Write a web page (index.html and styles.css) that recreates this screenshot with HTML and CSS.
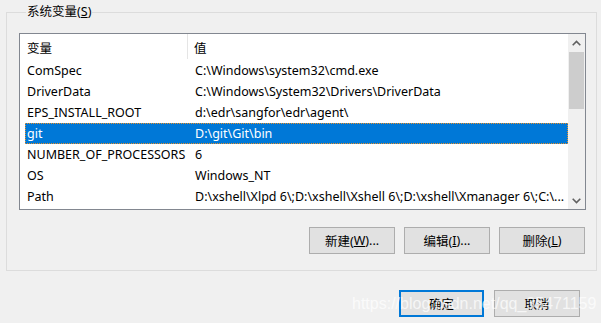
FILE: index.html
```html
<!DOCTYPE html>
<html lang="zh">
<head>
<meta charset="utf-8">
<link rel="stylesheet" href="styles.css">
</head>
<body>
<div class="dialog">
  <fieldset class="group">
    <legend class="group-title">系统变量(<u>S</u>)</legend>
    <div class="listbox">
      <div class="list-main">
        <div class="header">
          <div class="hcell hcell-name">变量</div>
          <div class="hcell hcell-value">值</div>
        </div>
        <div class="rows">
          <div class="row"><div class="cell cell-name">ComSpec</div><div class="cell cell-value">C:\Windows\system32\cmd.exe</div></div>
          <div class="row"><div class="cell cell-name">DriverData</div><div class="cell cell-value">C:\Windows\System32\Drivers\DriverData</div></div>
          <div class="row"><div class="cell cell-name">EPS_INSTALL_ROOT</div><div class="cell cell-value">d:\edr\sangfor\edr\agent\</div></div>
          <div class="row row-selected"><div class="cell cell-name">git</div><div class="cell cell-value">D:\git\Git\bin</div></div>
          <div class="row"><div class="cell cell-name">NUMBER_OF_PROCESSORS</div><div class="cell cell-value">6</div></div>
          <div class="row"><div class="cell cell-name">OS</div><div class="cell cell-value">Windows_NT</div></div>
          <div class="row"><div class="cell cell-name">Path</div><div class="cell cell-value">D:\xshell\Xlpd 6\;D:\xshell\Xshell 6\;D:\xshell\Xmanager 6\;C:\...</div></div>
        </div>
      </div>
      <div class="scrollbar">
        <div class="sb-btn">
          <svg width="9" height="6" viewBox="0 0 9 6"><path d="M0.7 5.3 L4.5 1.5 L8.3 5.3" fill="none" stroke="#606060" stroke-width="1.6"/></svg>
        </div>
        <div class="sb-track">
          <div class="sb-thumb"></div>
        </div>
        <div class="sb-btn">
          <svg width="9" height="6" viewBox="0 0 9 6"><path d="M0.7 0.7 L4.5 4.5 L8.3 0.7" fill="none" stroke="#606060" stroke-width="1.6"/></svg>
        </div>
      </div>
    </div>
    <div class="group-buttons">
      <button class="btn">新建(<u>W</u>)...</button>
      <button class="btn">编辑(<u>I</u>)...</button>
      <button class="btn">删除(<u>L</u>)</button>
    </div>
  </fieldset>
  <div class="dialog-buttons">
    <button class="btn btn-default">确定</button>
    <button class="btn">取消</button>
  </div>
  <div class="watermark">https://blog.csdn.net/qq_35471159</div>
</div>
</body>
</html>
```

FILE: styles.css
```css
* { box-sizing: border-box; }
html, body {
  margin: 0;
  padding: 0;
  background: #f0f0f0;
  width: 601px;
  height: 323px;
  overflow: hidden;
}
body {
  font-family: "Noto Sans", "Noto Sans CJK SC", sans-serif;
  font-size: 12.5px;
  color: #000;
}
.dialog {
  position: relative;
  width: 601px;
  height: 323px;
  padding: 4px 4px 0 6px;
}
.group {
  margin: 0;
  border: 1px solid #dcdcdc;
  padding: 13px 10px 16px 12px;
  min-width: 0;
}
.group-title {
  padding: 0 1px;
  margin-left: 7px;
  height: 16px;
  line-height: 16px;
}
u { text-decoration: underline; text-underline-offset: 1px; }
.listbox {
  display: flex;
  height: 177px;
  border: 1px solid #828790;
  background: #fff;
}
.list-main {
  flex: 1;
  min-width: 0;
  display: flex;
  flex-direction: column;
}
.header {
  display: flex;
  height: 26px;
  align-items: stretch;
}
.hcell {
  display: flex;
  align-items: center;
  padding-top: 1px;
}
.hcell-name {
  width: 168px;
  padding-left: 7px;
  border-right: 1px solid #e5e5e5;
  margin-bottom: 1px;
}
.hcell-value {
  padding-left: 6px;
}
.rows {
  display: flex;
  flex-direction: column;
}
.row {
  display: flex;
  height: 21px;
  margin-left: 5px;
  align-items: center;
}
.cell {
  white-space: nowrap;
  overflow: hidden;
  padding-left: 2px;
}
.cell-name { width: 168px; flex: none; }
.cell-value { flex: 1; min-width: 0; padding-right: 4px; }
.row-selected {
  background: #0078d7;
  color: #fff;
  outline: 1px dotted #e8902a;
  outline-offset: -1px;
}
.scrollbar {
  width: 17px;
  flex: none;
  background: #f0f0f0;
  display: flex;
  flex-direction: column;
}
.sb-btn {
  height: 17px;
  display: flex;
  align-items: center;
  justify-content: center;
}
.sb-track {
  flex: 1;
  padding: 1px 1px 0 1px;
}
.sb-thumb {
  height: 57px;
  background: #cdcdcd;
}
.group-buttons {
  display: flex;
  justify-content: flex-end;
  gap: 9px;
  margin-top: 17px;
  padding-right: 1px;
}
.btn {
  width: 86px;
  height: 27px;
  border: 1px solid #adadad;
  background: #e1e1e1;
  font: inherit;
  color: #000;
  padding: 0;
  margin: 0;
  display: flex;
  align-items: center;
  justify-content: center;
}
.btn-default {
  width: 85px;
  border: 2px solid #0078d7;
}
.dialog-buttons {
  display: flex;
  justify-content: flex-end;
  gap: 10px;
  margin-top: 19px;
  padding-right: 17px;
}
.watermark {
  position: absolute;
  left: 352px;
  top: 295px;
  font-family: "Liberation Sans", Arial, sans-serif;
  font-size: 16px;
  color: rgba(255, 255, 255, 0.72);
  white-space: nowrap;
  pointer-events: none;
}
```
